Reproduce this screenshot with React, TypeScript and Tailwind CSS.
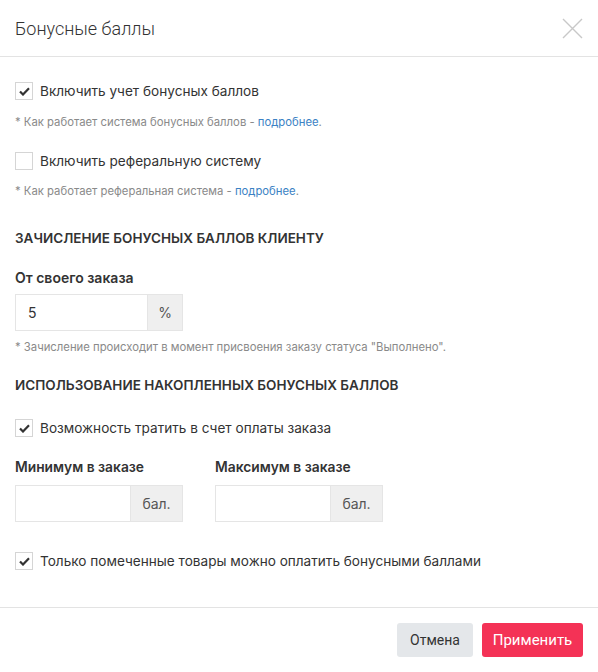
import { PropsWithChildren, useState } from "react";

const font = { fontFamily: "Inter, Roboto, sans-serif" };

const Check = ({ checked, onChange, children }: PropsWithChildren<{ checked: boolean; onChange: () => void }>) => (
  <label className="flex h-[18px] cursor-pointer items-center gap-[7px] text-[13.6px] leading-[18px] text-[#333]">
    <span
      className="flex h-[18px] w-[18px] items-center justify-center border border-[#d5d5d5] bg-white"
      onClick={onChange}
    >
      {checked && (
        <svg width="11" height="9" viewBox="0 0 11 9">
          <path d="M1 4.5 L4 7.5 L10 1.2" fill="none" stroke="#333" strokeWidth="2.2" />
        </svg>
      )}
    </span>
    {children}
  </label>
);

const Note = ({ children }: PropsWithChildren) => (
  <p className="text-[11.3px] leading-[16px] text-[#8a8a8a]">{children}</p>
);

const Addon = ({ value, unit, addonW }: { value: string; unit: string; addonW: string }) => (
  <div className="flex h-[37px] w-[168px] border border-[#e5e5e5]">
    <input
      className="min-w-0 flex-1 bg-white px-3 text-[14px] text-[#333] outline-none"
      defaultValue={value}
    />
    <span className={`flex items-center justify-center border-l border-[#e5e5e5] bg-[#efefef] text-[14px] text-[#555] ${addonW}`}>
      {unit}
    </span>
  </div>
);

export default function App() {
  const [bonus, setBonus] = useState(true);
  const [ref, setRef] = useState(false);
  const [spend, setSpend] = useState(true);
  const [marked, setMarked] = useState(true);

  return (
    <div className="h-[672px] w-[598px] bg-white" style={font}>
      <div className="flex h-[57px] items-center justify-between border-b border-[#e3e3e3] px-[15px]">
        <h2 className="text-[18px] font-light text-[#333]" style={{ fontFamily: "Roboto, sans-serif" }}>
          Бонусные баллы
        </h2>
        <svg width="21" height="21" viewBox="0 0 21 21" className="cursor-pointer">
          <path d="M1 1 L20 20 M20 1 L1 20" stroke="#c8c8c8" strokeWidth="1.4" />
        </svg>
      </div>

      <div className="flex h-[551px] flex-col border-b border-[#e3e3e3] px-[15px] pt-[25px]">
        <Check checked={bonus} onChange={() => setBonus(!bonus)}>Включить учет бонусных баллов</Check>
        <div className="mt-[14px]">
          <Note>
            * Как работает система бонусных баллов - <a className="text-[#3b82c4]">подробнее</a>.
          </Note>
        </div>
        <div className="mt-[22px]">
          <Check checked={ref} onChange={() => setRef(!ref)}>Включить реферальную систему</Check>
        </div>
        <div className="mt-[13px]">
          <Note>
            * Как работает реферальная система - <a className="text-[#3b82c4]">подробнее</a>.
          </Note>
        </div>

        <h3 className="mt-[29px] text-[13.5px] font-semibold uppercase leading-[20px] text-[#333]">
          Зачисление бонусных баллов клиенту
        </h3>
        <div className="mt-[20px] text-[14px] font-semibold leading-[20px] text-[#333]">От своего заказа</div>
        <div className="mt-[6px]">
          <Addon value="5" unit="%" addonW="w-[35px]" />
        </div>
        <div className="mt-[8px]">
          <Note>* Зачисление происходит в момент присвоения заказу статуса "Выполнено".</Note>
        </div>

        <h3 className="mt-[20px] text-[13.5px] font-semibold uppercase leading-[20px] text-[#333]">
          Использование накопленных бонусных баллов
        </h3>
        <div className="mt-[24px]">
          <Check checked={spend} onChange={() => setSpend(!spend)}>Возможность тратить в счет оплаты заказа</Check>
        </div>
        <div className="mt-[20px] flex gap-[32px]">
          <div className="flex flex-col gap-[8px]">
            <div className="text-[13.8px] font-semibold leading-[20px] text-[#333]">Минимум в заказе</div>
            <Addon value="" unit="бал." addonW="w-[52px]" />
          </div>
          <div className="flex flex-col gap-[8px]">
            <div className="text-[13.8px] font-semibold leading-[20px] text-[#333]">Максимум в заказе</div>
            <Addon value="" unit="бал." addonW="w-[52px]" />
          </div>
        </div>
        <div className="mt-[30px]">
          <Check checked={marked} onChange={() => setMarked(!marked)}>
            Только помеченные товары можно оплатить бонусными баллами
          </Check>
        </div>
      </div>

      <div className="flex justify-end gap-[9px] pr-[15px] pt-[15px]" style={{ fontFamily: "Roboto, sans-serif" }}>
        <button className="h-[34px] w-[76px] rounded-[3px] bg-[#e4e7ea] text-[14px] text-[#333]">Отмена</button>
        <button className="h-[34px] w-[101px] rounded-[3px] bg-[#f43256] text-[15px] text-white">Применить</button>
      </div>
    </div>
  );
}
